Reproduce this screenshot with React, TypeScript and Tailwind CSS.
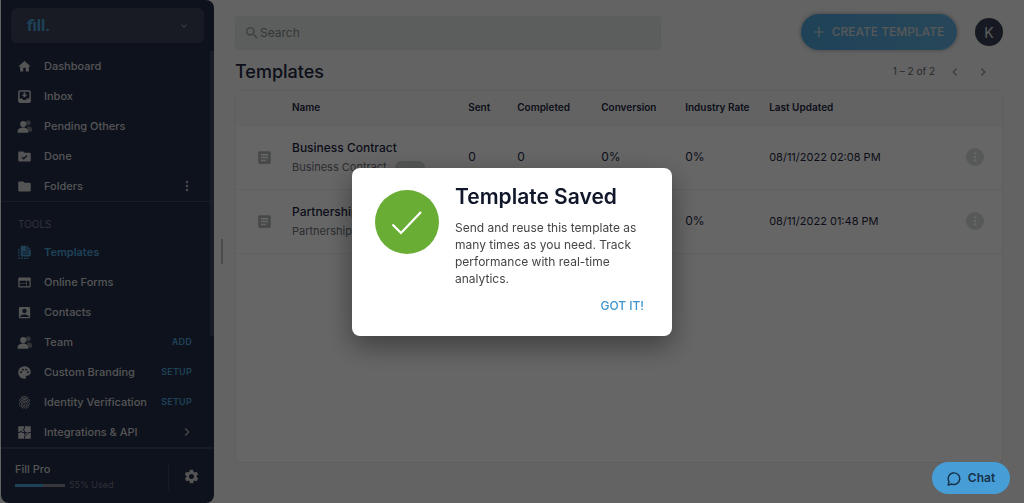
import React from "react";
import {
  MdAccountBox,
  MdArticle,
  MdChevronLeft,
  MdChevronRight,
  MdExpandMore,
  MdFingerprint,
  MdFolder,
  MdHome,
  MdMoreVert,
  MdPalette,
  MdSearch,
  MdSettings,
  MdWeb,
} from "react-icons/md";

type IconProps = { className?: string };

function InboxIcon({ className }: IconProps) {
  return (
    <svg viewBox="0 0 24 24" className={className} fill="none" aria-hidden="true">
      <rect x="3" y="3" width="18" height="18" rx="2" stroke="currentColor" strokeWidth="2.4" />
      <path d="M3 15h5.5c.6 1.6 1.9 2.6 3.5 2.6s2.900-1 3.500-2.600H21v6H3z" fill="currentColor" />
      <path d="M10.500 5.500h3V9H16.500L12 13.500 7.500 9h3z" fill="currentColor" />
    </svg>
  );
}

function PeopleIcon({ className }: IconProps) {
  return (
    <svg viewBox="0 0 24 24" className={className} fill="currentColor" aria-hidden="true">
      <g opacity="0.5">
        <circle cx="18" cy="6" r="4" />
        <path d="M16 12h3.500c2.500 0 4.500 2 4.500 4.500V20h-6z" />
      </g>
      <circle cx="10" cy="8" r="5" />
      <path d="M1 22v-3c0-3.300 4.500-5.500 9-5.500s8 2.200 8 5.500v3z" />
    </svg>
  );
}

function FolderCheckIcon({ className }: IconProps) {
  return (
    <svg viewBox="0 0 24 24" className={className} aria-hidden="true">
      <path
        d="M10 4H4c-1.100 0-2 .9-2 2v12c0 1.100.9 2 2 2h16c1.100 0 2-.9 2-2V8c0-1.100-.9-2-2-2h-8z"
        fill="currentColor"
      />
      <path d="m8 13 2.700 2.700L16 10.500" fill="none" stroke="#232d49" strokeWidth="2.200" />
    </svg>
  );
}

function TemplatesIcon({ className }: IconProps) {
  return (
    <svg viewBox="0 0 24 24" className={className} fill="none" aria-hidden="true">
      <path d="M8 1h8l6 6v9.500c0 1.100-.9 2-2 2H8c-1.100 0-2-.9-2-2V3c0-1.100.9-2 2-2z" fill="currentColor" />
      <path d="M15.500 2v5.500H21M9 11h10M9 14.500h10" stroke="#232d49" strokeWidth="1.500" />
      <path d="M3 6v13.500c0 1.100.9 2 2 2h13" stroke="currentColor" strokeWidth="2" strokeDasharray="3 1.500" />
    </svg>
  );
}

function PuzzleIcon({ className }: IconProps) {
  return (
    <svg viewBox="0 0 24 24" className={className} aria-hidden="true">
      <rect x="2" y="2" width="20" height="20" rx="1" fill="currentColor" />
      <path
        d="M12 2v4c-3-1-3 4 0 3v6c3-1 3 4 0 3v4M2 12h3c-1-3 4-3 3 0h7c-1 3 4 3 3 0h4"
        fill="none"
        stroke="#232d49"
        strokeWidth="1.500"
      />
    </svg>
  );
}

type NavItem = {
  label: string;
  Icon: React.ComponentType<IconProps>;
  active?: boolean;
  action?: string;
  trailing?: "menu" | "chevron";
};

const mainItems: NavItem[] = [
  { label: "Dashboard", Icon: MdHome },
  { label: "Inbox", Icon: InboxIcon },
  { label: "Pending Others", Icon: PeopleIcon },
  { label: "Done", Icon: FolderCheckIcon },
  { label: "Folders", Icon: MdFolder, trailing: "menu" },
];

const toolItems: NavItem[] = [
  { label: "Templates", Icon: TemplatesIcon, active: true },
  { label: "Online Forms", Icon: MdWeb },
  { label: "Contacts", Icon: MdAccountBox },
  { label: "Team", Icon: PeopleIcon, action: "ADD" },
  { label: "Custom Branding", Icon: MdPalette, action: "SETUP" },
  { label: "Identity Verification", Icon: MdFingerprint, action: "SETUP" },
  { label: "Integrations & API", Icon: PuzzleIcon, trailing: "chevron" },
];

function NavRow({ label, Icon, active, action, trailing }: NavItem) {
  return (
    <li className={`flex h-[30px] items-center pl-4 ${trailing ? "pr-[15px]" : "pr-[18px]"}`}>
      <a
        href="#"
        className={`flex flex-1 items-center gap-3 text-[11px] whitespace-nowrap ${
          active ? "font-semibold text-[#4fa3d8]" : "font-medium text-[#d2d2d2]"
        }`}
      >
        <Icon className="size-[15px] shrink-0" />
        {label}
      </a>
      {action && (
        <a href="#" className="text-[9px] font-semibold tracking-wide text-[#4fa3d8]">
          {action}
        </a>
      )}
      {trailing === "menu" && (
        <button type="button" aria-label="Folder options" className="text-[#b4b4b4]">
          <MdMoreVert className="size-4" />
        </button>
      )}
      {trailing === "chevron" && <MdChevronRight className="size-4 text-[#b4b4b4]" />}
    </li>
  );
}

function Sidebar() {
  return (
    <aside className="ml-px flex w-[213px] shrink-0 flex-col rounded-r-lg rounded-bl-lg bg-[#232d49] text-[#d2d2d2]">
      <div className="flex h-[51px] shrink-0 items-start px-[10px] pt-2">
        <button
          type="button"
          aria-label="Switch workspace"
          className="flex h-[35px] w-full items-center justify-between rounded-md bg-[#3c4458] pr-[14px] pl-4"
        >
          <span className="font-['Roboto',sans-serif] text-[16px] leading-none font-bold text-[#4ba6de]">fill.</span>
          <MdExpandMore className="size-3 text-[#8a8f9c]" />
        </button>
      </div>
      <div className="flex min-h-0 flex-1">
        <nav className="min-w-0 flex-1 overflow-hidden">
          <ul className="border-b border-[#3f485d]">
            {mainItems.map((item) => (
              <NavRow key={item.label} {...item} />
            ))}
          </ul>
          <h2 className="flex h-[35px] items-end pb-[5px] pl-[17px] text-[10px] text-[#7c828f]">TOOLS</h2>
          <ul>
            {toolItems.map((item) => (
              <NavRow key={item.label} {...item} />
            ))}
          </ul>
        </nav>
        <div className="h-[72%] w-1 bg-[#40485c]" />
      </div>
      <footer className="flex h-14 shrink-0 items-center border-t-2 border-[#3f485d] px-[14px]">
        <div className="flex flex-1 flex-col gap-[2px]">
          <span className="text-[11px] leading-4 font-medium">Fill Pro</span>
          <div className="flex items-center gap-1">
            <div className="flex h-[3px] w-[50px] bg-[#858b97]">
              <div className="w-[55%] bg-[#4ba6de]" />
            </div>
            <span className="text-[9px] leading-3 text-[#737a87]">55% Used</span>
          </div>
        </div>
        <div className="flex h-[27px] items-center border-l border-[#3f485d] pl-[14px]">
          <button type="button" aria-label="Settings">
            <MdSettings className="size-[17px]" />
          </button>
        </div>
      </footer>
    </aside>
  );
}

const rows = [
  { name: "Business Contract", sub: "Business Contract", updated: "08/11/2022 02:08 PM" },
  { name: "Partnership Agreement", sub: "Partnership Agreement", updated: "08/11/2022 01:48 PM" },
];

function TemplatesTable() {
  return (
    <div className="flex-1 rounded border border-[#e9eceb] bg-white">
      <table className="w-full table-fixed text-left text-[12px] text-[#1e2742]">
        <colgroup>
          <col className="w-14" />
          <col className="w-[23%]" />
          <col className="w-[49px]" />
          <col className="w-[84px]" />
          <col className="w-[84px]" />
          <col className="w-[84px]" />
          <col />
          <col className="w-[54px]" />
        </colgroup>
        <thead>
          <tr className="h-[34px] border-b border-[#f0f2f1] bg-[#f8f8f8] text-[10px]">
            <th aria-label="Type" />
            <th className="font-semibold">Name</th>
            <th className="font-semibold">Sent</th>
            <th className="font-semibold">Completed</th>
            <th className="font-semibold">Conversion</th>
            <th className="font-semibold whitespace-nowrap">Industry Rate</th>
            <th className="font-semibold">Last Updated</th>
            <th aria-label="Actions" />
          </tr>
        </thead>
        <tbody>
          {rows.map((row) => (
            <tr key={row.name} className="h-16 border-b border-[#f0f2f1]">
              <td>
                <MdArticle className="ml-5 size-[17px] text-[#b5b8b9]" />
              </td>
              <td className="whitespace-nowrap">
                <div className="leading-5 font-medium">{row.name}</div>
                <div className="flex items-center gap-2 text-[11px] leading-[18px] text-[#6d7077]">
                  {row.sub}
                  <span className="h-[13px] w-[30px] rounded-full bg-[#d4d6d6]" />
                </div>
              </td>
              <td>0</td>
              <td>0</td>
              <td>0%</td>
              <td>0%</td>
              <td className="text-[11px] whitespace-nowrap">{row.updated}</td>
              <td>
                <button
                  type="button"
                  aria-label={`Options for ${row.name}`}
                  className="ml-[18px] flex size-[18px] items-center justify-center rounded-full bg-[#d9dddc] text-white"
                >
                  <MdMoreVert className="size-[14px]" />
                </button>
              </td>
            </tr>
          ))}
        </tbody>
      </table>
    </div>
  );
}

function SavedDialog() {
  return (
    <div className="fixed inset-0 flex items-center justify-center bg-black/60">
      <div
        role="dialog"
        aria-modal="true"
        aria-labelledby="dialog-title"
        className="flex w-80 gap-4 rounded-lg bg-white pt-4 pr-7 pb-5 pl-[23px] shadow-[0_10px_28px_rgba(0,0,0,0.4)]"
      >
        <svg viewBox="0 0 64 64" className="mt-[6px] size-16 shrink-0" aria-hidden="true">
          <circle cx="32" cy="32" r="32" fill="#69ad34" />
          <path d="M17.500 34.500 26 43 46 22" fill="none" stroke="#fff" strokeWidth="2.200" />
        </svg>
        <div className="flex flex-1 flex-col">
          <h2 id="dialog-title" className="text-[21px] leading-[26px] font-semibold whitespace-nowrap text-[#11172a]">
            Template Saved
          </h2>
          <p className="mt-[9px] text-[12px] leading-[17px] text-[#454545]">
            Send and reuse this template as many times as you need. Track performance with real-time analytics.
          </p>
          <button type="button" className="mt-[9px] h-5 self-end text-[12px] leading-5 font-medium text-[#3d94ce]">
            GOT IT!
          </button>
        </div>
      </div>
    </div>
  );
}

export default function App() {
  return (
    <div className="flex h-screen overflow-hidden bg-[#f7f7f7] font-['Inter','Open_Sans',sans-serif]">
      <Sidebar />
      <div className="flex w-[21px] shrink-0 items-center pl-[7px]">
        <div className="h-[25px] w-[2px] bg-[#b8b8b8]" />
      </div>
      <main className="flex min-w-0 flex-1 flex-col pr-[21px] pb-10">
        <header className="flex h-[50px] shrink-0 items-end">
          <label className="flex h-[34px] w-[426px] items-center rounded bg-[#e6ebe9] pl-[9px] text-[#999d9c]">
            <MdSearch className="size-4" />
            <input
              type="search"
              aria-label="Search"
              placeholder="Search"
              className="min-w-0 flex-1 bg-transparent text-[12px] outline-none placeholder:text-[#858989]"
            />
          </label>
          <button
            type="button"
            className="mr-[18px] ml-auto flex h-9 w-[156px] items-center justify-center gap-2 rounded-full bg-linear-to-r from-[#4fa6dd] to-[#63b0df] text-[12px] font-medium whitespace-nowrap text-[#d8dcdc] shadow-[0_0_4px_rgba(0,0,0,0.35)]"
          >
            <svg viewBox="0 0 10 10" className="size-[10px] shrink-0" aria-hidden="true">
              <path d="M5 0v10M0 5h10" stroke="currentColor" strokeWidth="1.200" />
            </svg>
            CREATE TEMPLATE
          </button>
          <button
            type="button"
            aria-label="Account"
            className="mb-1 size-7 shrink-0 rounded-full bg-[#373f54] text-[14px] text-[#e6e6e6]"
          >
            K
          </button>
        </header>
        <div className="flex h-10 shrink-0 items-center pt-[3px]">
          <h1 className="flex-1 text-[18px] leading-6 font-medium text-[#1e2742]">Templates</h1>
          <span className="text-[10px] text-[#666a72]">1 – 2 of 2</span>
          <button type="button" aria-label="Previous page" className="ml-3 text-[#979a9e]">
            <MdChevronLeft className="size-4" />
          </button>
          <button type="button" aria-label="Next page" className="mr-3 ml-3 text-[#979a9e]">
            <MdChevronRight className="size-4" />
          </button>
        </div>
        <TemplatesTable />
      </main>
      <SavedDialog />
      <button
        type="button"
        className="fixed right-[14px] bottom-[9px] flex h-8 w-[78px] items-center justify-center gap-[6px] rounded-full bg-[#479dd6] text-[12px] font-semibold text-[#173149]"
      >
        <svg viewBox="0 0 16 16" className="size-[15px]" fill="none" aria-hidden="true">
          <path
            d="M2.200 11.500A6.200 6.200 0 1 1 5 13.900L1.200 15z"
            stroke="currentColor"
            strokeWidth="1.500"
            strokeLinejoin="round"
          />
        </svg>
        Chat
      </button>
    </div>
  );
}
